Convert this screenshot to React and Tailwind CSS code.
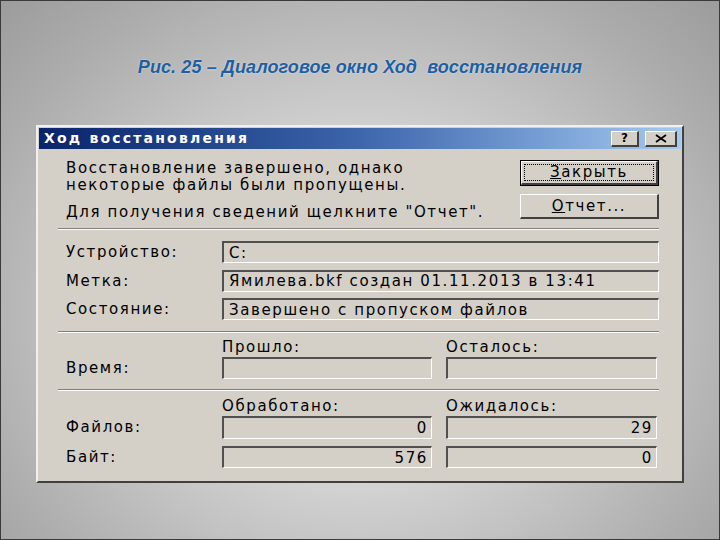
const ui = { fontFamily: '"DejaVu Sans", "Liberation Sans", sans-serif' }

function Sep() {
  return <div className="h-[2px] border-t border-t-[#808080] border-b border-b-white" />
}

function Field({ value = '', right = false, className = '' }) {
  return (
    <div
      className={`h-[22px] flex items-center px-[5px] bg-[#d4d0c8] border-t-2 border-l-2 border-t-[#505050] border-l-[#505050] border-b border-r border-b-white border-r-white text-[15px] tracking-[1.6px] text-black ${right ? 'justify-end pr-[3px]' : ''} ${className}`}
    >
      {value}
    </div>
  )
}

function Label({ children }) {
  return <div className="w-[156px] shrink-0 text-[15px] tracking-[1.6px] text-black">{children}</div>
}

export default function App() {
  return (
    <div
      className="w-[720px] h-[540px] overflow-hidden border border-[#3a3a3a] flex flex-col"
      style={{ background: 'radial-gradient(ellipse at 50% 58%, #ebebeb 0%, #d6d6d6 35%, #acacac 80%, #9c9c9c 100%)' }}
    >
      <div
        className="mt-[53px] text-center text-[18px] font-bold italic text-[#1f5f9f] tracking-[0.1px]"
        style={{ fontFamily: '"Liberation Sans", Arial, sans-serif', textShadow: '0 0 2px rgba(255,255,255,0.6)' }}
      >
        Рис. 25 – Диалоговое окно Ход&nbsp; восстановления
      </div>

      <div
        className="ml-[35px] mt-[44px] w-[648px] h-[358px] bg-[#d4d0c8] border-t-2 border-l-2 border-t-[#f0f0f0] border-l-[#f0f0f0] border-b-2 border-r-2 border-b-[#404040] border-r-[#404040] flex flex-col"
        style={ui}
      >
        {/* title bar */}
        <div className="mx-[1px] mt-[1px] h-[21px] flex items-center justify-between pl-[5px] pr-[4px] bg-gradient-to-r from-[#0a246a] via-[#3d66ad] to-[#a6caf0]">
          <span className="text-white font-bold text-[14px] tracking-[2.2px]">Ход восстановления</span>
          <div className="flex gap-[6px]">
            <div className="w-[28px] h-[16px] bg-[#d4d0c8] border-t border-l border-white border-b-2 border-r-2 border-b-[#404040] border-r-[#404040] flex items-center justify-center text-[12px] font-bold leading-none">?</div>
            <div className="w-[32px] h-[16px] bg-[#d4d0c8] border-t border-l border-white border-b-2 border-r-2 border-b-[#404040] border-r-[#404040] flex items-center justify-center">
              <svg width="14" height="9" viewBox="0 0 14 9">
                <path d="M2 1 L12 8 M12 1 L2 8" stroke="#000" strokeWidth="1.8" />
              </svg>
            </div>
          </div>
        </div>

        {/* body */}
        <div className="flex flex-col pl-[24px] pr-[23px] pt-[11px] text-black">
          <div className="flex justify-between pl-[4px]">
            <div className="text-[15px] tracking-[1.6px] leading-[17px]">
              <div>Восстановление завершено, однако</div>
              <div>некоторые файлы были пропущены.</div>
              <div className="mt-[10px]">Для получения сведений щелкните "Отчет".</div>
            </div>
            <div className="w-[139px] flex flex-col gap-[8px]">
              <div className="h-[26px] border border-black bg-[#d4d0c8] flex">
                <div className="flex-1 border-t border-l border-white border-b-2 border-r-2 border-b-[#404040] border-r-[#404040] p-[2px] flex">
                  <div className="flex-1 border border-dotted border-black flex items-center justify-center text-[15px] tracking-[1.6px]">
                    <span><span className="underline">З</span>акрыть</span>
                  </div>
                </div>
              </div>
              <div className="h-[25px] bg-[#d4d0c8] border-t border-l border-white border-b-2 border-r-2 border-b-[#404040] border-r-[#404040] flex items-center justify-center text-[15px] tracking-[1.6px]">
                <span><span className="underline">О</span>тчет...</span>
              </div>
            </div>
          </div>

          <div className="mt-[7px] -ml-[4px]"><Sep /></div>

          <div className="mt-[11px] flex flex-col gap-[6px] pl-[4px]">
            <div className="flex items-center"><Label>Устройство:</Label><Field value="C:" className="flex-1" /></div>
            <div className="flex items-center"><Label>Метка:</Label><Field value="Ямилева.bkf создан 01.11.2013 в 13:41" className="flex-1" /></div>
            <div className="flex items-center"><Label>Состояние:</Label><Field value="Завершено с пропуском файлов" className="flex-1" /></div>
          </div>

          <div className="mt-[10px] -ml-[4px]"><Sep /></div>

          <div className="mt-[7px] pl-[4px]">
            <div className="flex text-[15px] tracking-[1.6px] leading-[15px]">
              <div className="w-[156px]" />
              <div className="w-[224px]">Прошло:</div>
              <div>Осталось:</div>
            </div>
            <div className="flex items-center mt-[2px]">
              <Label>Время:</Label>
              <Field className="w-[210px]" />
              <Field className="w-[211px] ml-[14px]" />
            </div>
          </div>

          <div className="mt-[10px] -ml-[4px]"><Sep /></div>

          <div className="mt-[8px] pl-[4px]">
            <div className="flex text-[15px] tracking-[1.6px] leading-[15px]">
              <div className="w-[156px]" />
              <div className="w-[224px]">Обработано:</div>
              <div>Ожидалось:</div>
            </div>
            <div className="flex items-center mt-[2px]">
              <Label>Файлов:</Label>
              <Field value="0" right className="w-[210px] h-[23px]" />
              <Field value="29" right className="w-[211px] ml-[14px] h-[23px]" />
            </div>
            <div className="flex items-center mt-[7px]">
              <Label>Байт:</Label>
              <Field value="576" right className="w-[210px]" />
              <Field value="0" right className="w-[211px] ml-[14px]" />
            </div>
          </div>
        </div>
      </div>
    </div>
  )
}
